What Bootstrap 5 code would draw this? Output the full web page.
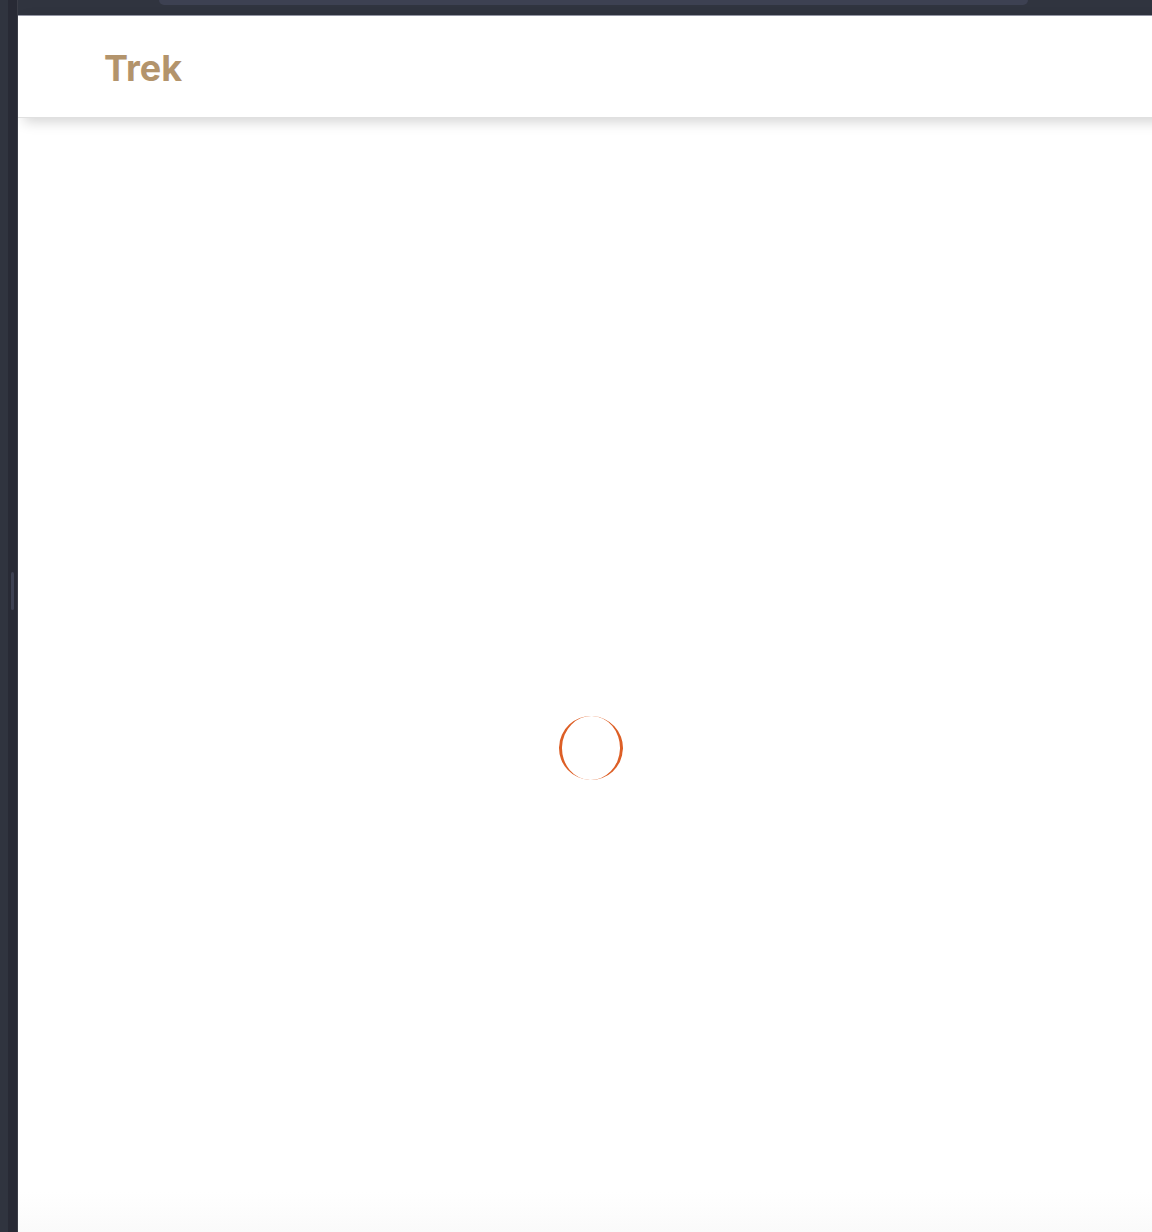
<!DOCTYPE html>
<html lang="en">
<head>
<meta charset="utf-8">
<meta name="viewport" content="width=device-width, initial-scale=1">
<title>Trek</title>
<link href="https://cdn.jsdelivr.net/npm/bootstrap@5.3.0/dist/css/bootstrap.min.css" rel="stylesheet">
<style>
body { font-family: Inter, "Liberation Sans", sans-serif; background: #fff; }
.side-rail { width: 8px; background: #30343f; }
.splitter { width: 10px; padding-bottom: 50px; background: #282a35; border-right: 1px solid #3c3e48; }
.grip { width: 3px; height: 38px; background: #3d4152; }
.chrome-bar { height: 16px; background: #30343f; border-bottom: 1px solid #9a9caa; padding: 0 124px 0 141px; }
.address { height: 5px; background: #3d4152; border-radius: 0 0 6px 6px; }
.site-header { height: 102px; margin-right: -24px; padding: 2px 86px 0; border-bottom: 1px solid #e0e0e0; box-shadow: 6px 4px 12px rgba(0, 0, 0, .17); }
.site-name, .site-name:hover { color: #b3946c; font-size: 36px; line-height: 48px; font-weight: 700; }
.stage { padding: 146px 0 0 12px; background: linear-gradient(to top, #fafafa, #fff 40px); }
.ring { width: 64px; height: 64px; border: 0 solid #dd5f26; border-width: 0 3px; border-radius: 50%; transform: rotate(2deg); }
</style>
</head>
<body>
<div class="d-flex min-vh-100 overflow-hidden">
  <div class="side-rail flex-shrink-0"></div>
  <div class="splitter flex-shrink-0 d-flex align-items-center justify-content-center">
    <div class="grip rounded-1"></div>
  </div>
  <div class="flex-grow-1 d-flex flex-column overflow-hidden">
    <div class="chrome-bar"><div class="address"></div></div>
    <header class="site-header bg-white d-flex align-items-center position-relative">
      <a class="site-name text-decoration-none" href="#">Trek</a>
    </header>
    <main class="stage flex-grow-1 d-flex align-items-center justify-content-center">
      <div class="ring" role="status" aria-label="Loading"></div>
    </main>
  </div>
</div>
<script src="https://cdn.jsdelivr.net/npm/bootstrap@5.3.0/dist/js/bootstrap.bundle.min.js"></script>
</body>
</html>
